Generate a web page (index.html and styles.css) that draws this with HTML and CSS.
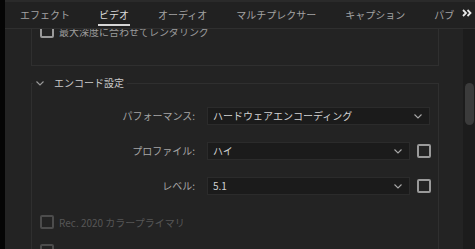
FILE: index.html
```html
<!DOCTYPE html>
<html>
<head>
  <meta charset="utf-8">
  <title>書き出し設定 - ビデオ</title>
  <link rel="stylesheet" href="styles.css">
</head>
<body>
  <div class="app">
    <div class="edge"></div>
    <div class="panel">
      <div class="tabs">
        <div class="tab-list">
          <span class="tab"><span class="tab-label">エフェクト</span></span>
          <span class="tab active"><span class="tab-label">ビデオ</span></span>
          <span class="tab"><span class="tab-label">オーディオ</span></span>
          <span class="tab"><span class="tab-label">マルチプレクサー</span></span>
          <span class="tab"><span class="tab-label">キャプション</span></span>
          <span class="tab"><span class="tab-label">パブリッシュ</span></span>
        </div>
        <span class="tab-more">
          <svg width="10" height="8" viewBox="0 0 10 8"><path d="M1 1l3 3-3 3M5.5 1l3 3-3 3" fill="none" stroke="#e8e8e8" stroke-width="1.8"/></svg>
        </span>
      </div>

      <div class="body">
        <div class="scroll">
          <div class="scroll-inner">
            <div class="box">
              <label class="check-row">
                <span class="check"></span>
                <span>最大深度に合わせてレンダリング</span>
              </label>
            </div>

            <fieldset class="section">
              <legend class="section-head">
                <svg class="chev" width="8" height="5" viewBox="0 0 8 5"><path d="M0.5 0.5l3.5 3.5 3.5-3.5" fill="none" stroke="#9a9a9a" stroke-width="1.1"/></svg>
                <span>エンコード設定</span>
              </legend>

              <div class="form">
                <span class="label">パフォーマンス:</span>
                <div class="select wide">
                  <span>ハードウェアエンコーディング</span>
                  <svg width="8" height="5" viewBox="0 0 8 5"><path d="M0.5 0.5l3.5 3.5 3.5-3.5" fill="none" stroke="#a8a8a8" stroke-width="1.1"/></svg>
                </div>

                <span class="label">プロファイル:</span>
                <div class="select">
                  <span>ハイ</span>
                  <svg width="8" height="5" viewBox="0 0 8 5"><path d="M0.5 0.5l3.5 3.5 3.5-3.5" fill="none" stroke="#a8a8a8" stroke-width="1.1"/></svg>
                </div>
                <span class="check"></span>

                <span class="label">レベル:</span>
                <div class="select">
                  <span>5.1</span>
                  <svg width="8" height="5" viewBox="0 0 8 5"><path d="M0.5 0.5l3.5 3.5 3.5-3.5" fill="none" stroke="#a8a8a8" stroke-width="1.1"/></svg>
                </div>
                <span class="check"></span>
              </div>

              <label class="check-row disabled">
                <span class="check"></span>
                <span>Rec. 2020 カラープライマリ</span>
              </label>
              <label class="check-row disabled">
                <span class="check"></span>
              </label>
            </fieldset>
          </div>
        </div>
        <div class="scrollbar">
          <div class="thumb"></div>
        </div>
      </div>
    </div>
  </div>
</body>
</html>
```

FILE: styles.css
```css
html, body {
  margin: 0;
  padding: 0;
  height: 100%;
  background-color: #000;
}

body {
  font-family: "Noto Sans CJK JP", "Noto Sans", sans-serif;
  font-size: 10px;
  color: #a6a6a6;
  overflow: hidden;
}

.app {
  display: flex;
  height: 249px;
}

.edge {
  width: 5px;
  flex-shrink: 0;
  background-color: #050505;
}

.panel {
  flex-grow: 1;
  display: flex;
  flex-direction: column;
  background-color: #232323;
  min-width: 0;
}

/* tab strip */
.tabs {
  display: flex;
  height: 26px;
  border-top: 2px solid #2a2a2a;
  border-bottom: 1px solid #2f2f2f;
  background-color: #212121;
  flex-shrink: 0;
}

.tab-list {
  display: flex;
  width: 450px;
  overflow: hidden;
}

.tab {
  flex-shrink: 0;
  padding: 0 14px 0 15px;
  color: #a3a3a3;
  white-space: nowrap;
}

.tab-label {
  display: block;
  margin: 0 -1px;
  padding: 6px 1px 2px;
  line-height: 14px;
  border-bottom: 2px solid transparent;
}

.tab.active {
  color: #dcdcdc;
}

.tab.active .tab-label {
  border-bottom-color: #d6d6d6;
}

.tab-more {
  display: flex;
  align-items: center;
  padding: 0 0 4px 7px;
}

/* content */
.body {
  flex-grow: 1;
  display: flex;
  min-height: 0;
}

.scroll {
  flex-grow: 1;
  overflow: hidden;
}

/* scrolled a little way down */
.scroll-inner {
  margin-top: -16px;
  padding: 0 24px 0 26px;
}

.box {
  border: 1px solid #2f2f2f;
  padding: 10px 8px 27px;
}

.check-row {
  display: flex;
  align-items: center;
  gap: 5px;
  height: 14px;
  color: #9c9c9c;
  white-space: nowrap;
}

.check {
  display: block;
  width: 10px;
  height: 10px;
  border: 2px solid #9a9a9a;
  border-radius: 2px;
  flex-shrink: 0;
}

.section {
  margin: 10px 0 0;
  padding: 0 0 20px;
  border: 1px solid #2f2f2f;
  border-bottom: none;
}

.section-head {
  display: flex;
  align-items: center;
  margin-left: 1px;
  padding: 0 3px 0 3px;
  line-height: 14px;
  color: #c9c9c9;
}

.chev {
  margin-right: 10px;
}

.form {
  display: grid;
  grid-template-columns: 163px 203px 13px;
  column-gap: 12px;
  row-gap: 17px;
  align-items: center;
  margin: 17px 0 20px;
}

.form .check {
  margin-left: -5px;
}

.label {
  text-align: right;
  line-height: 18px;
}

.select {
  display: flex;
  align-items: center;
  justify-content: space-between;
  height: 16px;
  padding: 0 7px 0 5px;
  background-color: #1b1b1b;
  border: 1px solid #2b2b2b;
  color: #d2d2d2;
  line-height: 16px;
}

.select.wide {
  grid-column: 2 / 4;
  margin-right: 5px;
}

.check-row.disabled {
  margin: 0 0 15px 8px;
  color: #565656;
}

.check-row.disabled .check {
  border-color: #4c4c4c;
}

/* scrollbar */
.scrollbar {
  width: 12px;
  flex-shrink: 0;
  background-color: #1c1c1c;
}

.thumb {
  width: 9px;
  height: 42px;
  margin: 54px 0 0 2px;
  border-radius: 5px;
  background-color: #3b3b3b;
}
```
